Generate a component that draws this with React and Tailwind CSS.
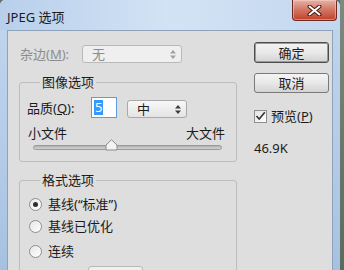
import React from "react";

const font = "font-['Noto_Sans','Noto_Sans_CJK_SC',sans-serif]";

function UpDown({ color = "#3c3c3c" }) {
  return (
    <svg width="6" height="9" viewBox="0 0 6 9">
      <path d="M3 0 L6 3.5 L0 3.5 Z" fill={color} />
      <path d="M3 9 L6 5.5 L0 5.5 Z" fill={color} />
    </svg>
  );
}

function Select({ value, disabled, className }) {
  return (
    <div
      className={`flex shrink-0 items-center justify-between rounded-[3px] border ${
        disabled
          ? "border-[#b9b9b9] bg-[#efefef] text-[#8c8c8c]"
          : "border-[#a9a9a9] bg-gradient-to-b from-[#f8f8f8] to-[#e4e4e4] text-[#1b1b1b]"
      } ${className}`}
    >
      <span className="pl-[9px]">{value}</span>
      <span className="pr-[5px]">
        <UpDown color={disabled ? "#a0a0a0" : "#3c3c3c"} />
      </span>
    </div>
  );
}

function Button({ label, primary, className }) {
  return (
    <div
      className={`flex w-[75px] shrink-0 items-center justify-center rounded-[3px] border bg-gradient-to-b from-[#f4f4f4] via-[#e8e8e8] to-[#d3d3d3] ${
        primary ? "border-[#4d4d4d] shadow-[inset_0_0_0_1px_#9a9a9a]" : "border-[#7a7a7a]"
      } ${className}`}
    >
      {label}
    </div>
  );
}

function Radio({ checked, label, className }) {
  return (
    <div className={`flex h-[16px] items-center pl-[9px] ${className}`}>
      <span className="flex h-[13px] w-[13px] items-center justify-center rounded-full border border-[#8e8f8f] bg-gradient-to-br from-[#e6e6e6] to-[#ffffff]">
        {checked && <span className="h-[5px] w-[5px] rounded-full bg-[#2e2e2e]" />}
      </span>
      <span className="ml-[6px]">{label}</span>
    </div>
  );
}

function Group({ title, className, children }) {
  return (
    <div className={`relative w-[218px] shrink-0 rounded-[3px] border border-[#bdbdbd] ${className}`}>
      <span className="absolute top-[-9px] bg-[#dedede] px-[2px]" style={{ left: 20 }}>
        {title}
      </span>
      {children}
    </div>
  );
}

export default function App() {
  return (
    <div className={`flex h-[270px] w-[344px] overflow-hidden bg-[#5f6e66] text-[13px] leading-[16px] text-[#1b1b1b] ${font}`}>
      <div className="flex h-[270px] w-[340px] shrink-0 flex-col overflow-hidden rounded-tl-[5px] rounded-tr-[6px] bg-gradient-to-b from-[#c1d6ee] via-[#b6cde8] to-[#a6c1e0]">
        {/* title bar */}
        <div className="flex h-[30px] shrink-0 items-start rounded-tl-[5px] rounded-tr-[6px] bg-gradient-to-r from-[#b8cfeb] via-[#d3e3f5] to-[#c3d7ef]">
          <span className="pl-[7px] pt-[9px]">JPEG 选项</span>
          <div className="ml-auto mr-[3px] flex h-[21px] w-[45px] items-center justify-center rounded-b-[4px] border border-t-0 border-[#6e2a1e] bg-gradient-to-b from-[#e7b2a6] via-[#d07562] to-[#c13e26] shadow-[inset_0_0_0_1px_rgba(255,220,210,0.45)]">
            <svg width="15" height="11" viewBox="0 0 15 11">
              <path d="M2.5 1.5 L12.5 9.5 M12.5 1.5 L2.5 9.5" stroke="#4a1a12" strokeWidth="4" strokeLinecap="round" />
              <path d="M2.5 1.5 L12.5 9.5 M12.5 1.5 L2.5 9.5" stroke="#ffffff" strokeWidth="2" strokeLinecap="round" />
            </svg>
          </div>
        </div>

        {/* body */}
        <div className="mx-[7px] flex min-h-0 flex-1 overflow-hidden border border-b-0 border-[#8ea3ba] bg-[#dedede]">
          {/* left column */}
          <div className="ml-[11px] flex w-[218px] shrink-0 flex-col">
            <div className="mt-[14px] flex h-[18px] shrink-0 items-center">
              <span className="w-[63px] pl-px text-[#8d8d8d]">
                杂边(<span className="underline">M</span>):
              </span>
              <Select value="无" disabled className="h-[18px] w-[100px]" />
            </div>

            <Group title="图像选项" className="mt-[19px] h-[80px]">
              <div className="mt-[14px] flex h-[21px] items-center pl-[7px]">
                <span className="w-[64px]">
                  品质(<span className="underline">Q</span>):
                </span>
                <div className="flex h-[21px] w-[26px] items-center border border-[#5b9de0] bg-white pl-[2px]">
                  <span className="bg-[#3399ff] px-px leading-[15px] text-white">5</span>
                </div>
                <Select value="中" className="ml-[10px] h-[18px] w-[60px] self-end" />
              </div>
              <div className="mt-[7px] flex justify-between pl-[8px] pr-[11px]">
                <span>小文件</span>
                <span>大文件</span>
              </div>
              <div className="relative ml-[13px] mt-[4px] h-[5px] w-[189px] rounded-full border border-[#9a9a9a] bg-gradient-to-b from-[#b0b0b0] to-[#d6d6d6]">
                <svg className="absolute left-[71px] top-[-7px]" width="13" height="12" viewBox="0 0 13 12">
                  <path d="M6.5 0.8 L12 6 L12 11 L1 11 L1 6 Z" fill="#f3f3f3" stroke="#8a8a8a" strokeWidth="1" />
                </svg>
              </div>
            </Group>

            <Group title="格式选项" className="mt-[18px] h-[110px]">
              <Radio checked label={"基线(\u201C标准\u201D)"} className="mt-[15px]" />
              <Radio label="基线已优化" className="mt-[6px]" />
              <Radio label="连续" className="mt-[9px]" />
              <div className="ml-[68px] mt-[7px] h-[18px] w-[55px] rounded-[3px] border border-[#b9b9b9] bg-[#efefef]" />
            </Group>
          </div>

          {/* right column */}
          <div className="ml-[17px] flex w-[75px] shrink-0 flex-col">
            <Button label="确定" primary className="mt-[11px] h-[21px]" />
            <Button label="取消" className="mt-[10px] h-[20px]" />
            <div className="mt-[15px] flex h-[16px] items-center">
              <span className="flex h-[13px] w-[13px] items-center justify-center border border-[#8e8f8f] bg-gradient-to-br from-[#e3e3e3] to-[#ffffff]">
                <svg width="11" height="10" viewBox="0 0 11 10">
                  <path d="M1.5 5 L4.2 8 L9.8 1.2" fill="none" stroke="#333" strokeWidth="1.6" />
                </svg>
              </span>
              <span className="ml-[4px]">
                预览(<span className="underline">P</span>)
              </span>
            </div>
            <span className="mt-[16px]">46.9K</span>
          </div>
        </div>
      </div>
      <div className="flex-1 bg-gradient-to-b from-[#7c8a80] to-[#5a6a60]" />
    </div>
  );
}
